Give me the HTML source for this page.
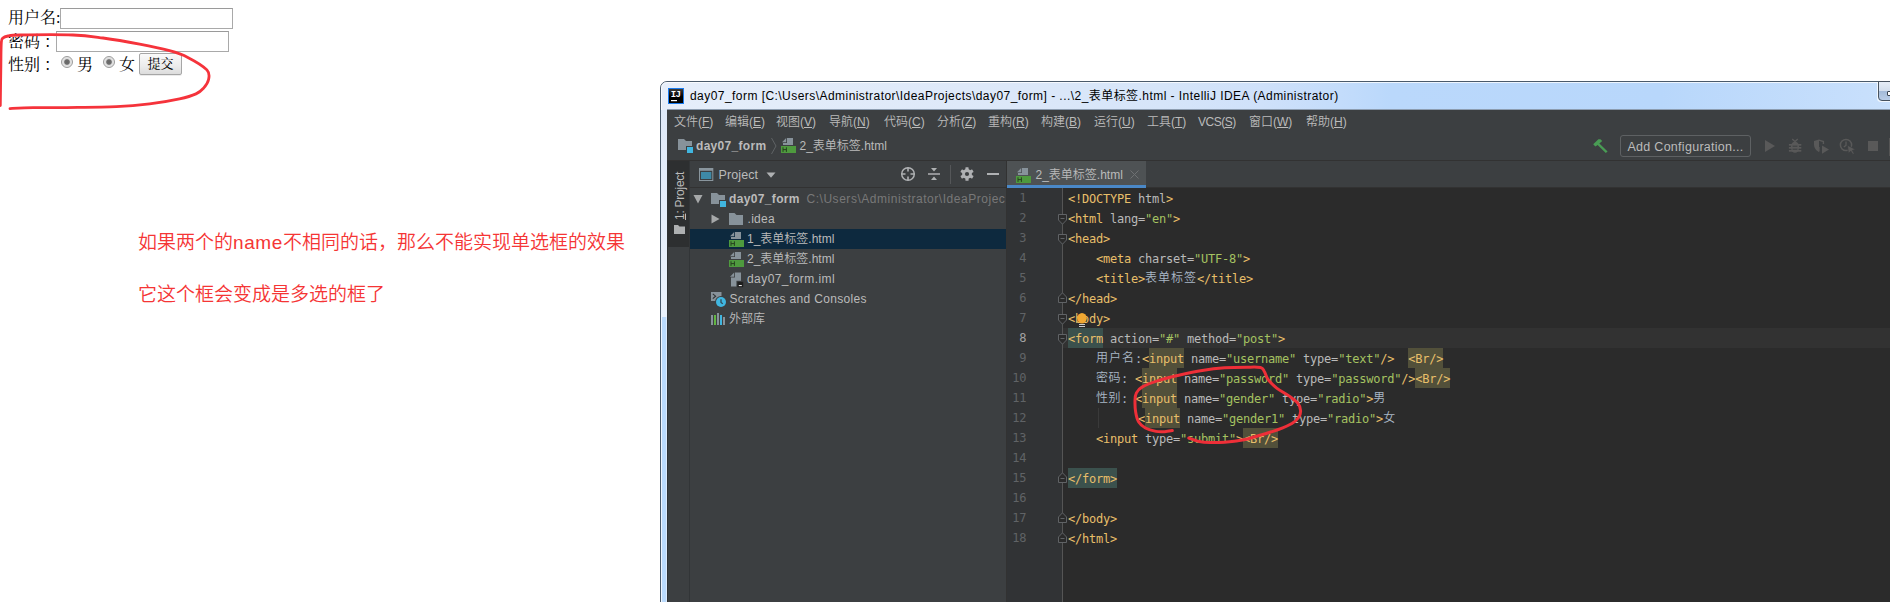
<!DOCTYPE html>
<html lang="zh">
<head>
<meta charset="UTF-8">
<title>表单标签</title>
<style>
html,body{margin:0;padding:0;}
body{width:1890px;height:602px;position:relative;overflow:hidden;background:#fff;
  font-family:"Liberation Sans","Noto Sans CJK SC",sans-serif;}
.abs{position:absolute;}
/* ---------- top-left browser form ---------- */
.frm{position:absolute;left:0;top:0;font-family:"Liberation Serif","Noto Serif CJK SC",serif;font-size:16px;color:#000;}
.frm .t{position:absolute;white-space:nowrap;line-height:18px;height:18px;}
.frm .inp{position:absolute;box-sizing:border-box;width:173px;height:21px;border:1px solid #a9a9a9;border-top-color:#9a9a9a;background:#fff;}
.frm .rad{position:absolute;box-sizing:border-box;width:12px;height:12px;border-radius:50%;border:1px solid #9b9b9b;
  background:radial-gradient(circle at 50% 50%,#666 0,#6e6e6e 2.3px,#dcdcdc 3.3px,#f2f2f2 100%);}
.frm .btn{position:absolute;box-sizing:border-box;left:139px;top:53px;width:43px;height:22px;border:1px solid #a6a6a6;border-radius:2px;
  background:linear-gradient(#fafafa,#ececec 60%,#dcdcdc);font-family:"Liberation Serif","Noto Serif CJK SC",serif;font-size:13px;line-height:20px;text-align:center;color:#000;box-shadow:0 1px 0 rgba(0,0,0,.08);}
/* ---------- red notes ---------- */
.note{position:absolute;left:138px;white-space:nowrap;color:#f53535;font-weight:350;font-family:"Liberation Sans","Noto Sans CJK SC",sans-serif;font-size:19px;line-height:26px;height:26px;}
/* ---------- IDE window ---------- */
.win{position:absolute;left:660px;top:81px;width:1300px;height:600px;box-sizing:border-box;border:1px solid #4a5a6b;border-radius:7px 0 0 0;
  background:linear-gradient(90deg,#e6eefa 0,#dee9f9 300px,#d6e5f9 500px,#cfe1fa 600px,#c3dcfb 680px,#bad8fb 730px,#b8d7fb 1000px,#c9e0fc 1230px);}
.win .hl{position:absolute;left:0;top:0;right:0;bottom:0;border:1px solid rgba(255,255,255,.75);border-radius:6px 0 0 0;}
.ide{position:absolute;left:667px;top:110px;width:1300px;height:600px;background:#3c3f41;color:#bbb;font-size:12px;font-weight:350;}
.ide .t{position:absolute;white-space:nowrap;line-height:16px;height:16px;}
.mono{font-family:"DejaVu Sans Mono","Liberation Mono","Noto Sans CJK SC",monospace;}

.ide u{text-decoration:underline;text-underline-offset:1px;}
.menu{position:absolute;left:0;top:0;width:100%;height:23px;}
.menu .t{top:4px;}
.nav{position:absolute;left:0;top:23px;width:100%;height:27px;border-bottom:1px solid #323232;}
.b{font-weight:bold;}

.ttl{left:690px;top:87px;letter-spacing:.45px;font-size:12px;line-height:18px;color:#000;white-space:nowrap;}
.wbtn{left:1878px;top:81px;width:30px;height:20px;box-sizing:border-box;border:1px solid #47525f;border-radius:0 0 0 4px;
  background:linear-gradient(#e6edf7 0,#d3deed 48%,#a3bad8 50%,#b9cde7 100%);box-shadow:-1px 1px 0 rgba(255,255,255,.75);}
.cfg{left:953px;top:25px;width:131px;height:22px;box-sizing:border-box;border:1px solid #5e6163;border-radius:3px;}
.vt{transform:rotate(-90deg);transform-origin:0 0;font-size:12px;}
.proj{position:absolute;left:23px;top:51px;width:316px;height:560px;background:#3c3f41;overflow:hidden;}
.phead{position:absolute;left:0;top:0;width:316px;height:26px;border-bottom:1px solid #323232;}
.sel{background:#0d293e;}
.dim{color:#787878;}
.ed{position:absolute;left:339px;top:51px;width:900px;height:560px;background:#2b2b2b;border-left:1px solid #323232;}
.tabs{position:absolute;left:0;top:0;width:900px;height:27px;background:#3c3f41;box-sizing:border-box;border-bottom:1px solid #323232;}
.tab{position:absolute;left:0;top:0;width:139px;height:27px;background:#4e5254;}
.gut{position:absolute;left:0;top:27px;width:55px;height:540px;background:#313335;border-right:1px solid #555;}
.cur{position:absolute;left:56px;top:167px;width:850px;height:20px;background:#323232;}

.row{position:absolute;left:0;width:900px;height:20px;line-height:20px;font-family:"DejaVu Sans Mono","Liberation Mono","Noto Sans CJK SC",monospace;font-size:12px;white-space:pre;letter-spacing:-0.224px;}
.ln{position:absolute;left:0;width:19.200px;text-align:right;color:#606366;}
.cur-n{color:#a4a3a3;}
.cd{position:absolute;left:61px;top:1px;height:20px;color:#a9b7c6;}
.tg{color:#e8bf6a;}.an{color:#bababa;}.av{color:#a5c261;}
.cj{font-family:"Noto Sans CJK SC",sans-serif;letter-spacing:1px;line-height:10px;position:relative;top:-1px;}
.hi{background:#52503a;display:inline-block;height:20px;vertical-align:top;margin-top:-1px;padding-top:1px;box-sizing:border-box;}
.hm{background:#3b514d;display:inline-block;height:20px;vertical-align:top;margin-top:-1px;padding-top:1px;box-sizing:border-box;}
.fm{left:51px;}
.fc{position:relative;left:4px;}
</style>
</head>
<body>



<!-- ================= browser form (top-left) ================= -->
<div class="frm">
  <span class="t" style="left:8px;top:9px;">用户名:</span>
  <div class="inp" style="left:60px;top:8px;"></div>
  <span class="t" style="left:8px;top:33px;">密码<span class="fc">：</span></span>
  <div class="inp" style="left:56px;top:31px;"></div>
  <span class="t" style="left:8px;top:56px;">性别<span class="fc">：</span></span>
  <div class="rad" style="left:61px;top:56px;"></div>
  <span class="t" style="left:77px;top:56px;">男</span>
  <div class="rad" style="left:103px;top:56px;"></div>
  <span class="t" style="left:119px;top:56px;">女</span>
  <div class="btn">提交</div>
</div>

<!-- ================= red notes ================= -->
<div class="note" style="top:230px;">如果两个的<span style="letter-spacing:.6px;font-weight:400;">name</span>不相同的话，那么不能实现单选框的效果</div>
<div class="note" style="top:282px;">它这个框会变成是多选的框了</div>

<!-- ================= IDE window ================= -->
<div class="win"><div class="hl"></div></div>
<div class="abs" style="left:661px;top:110px;width:6px;height:207px;background:linear-gradient(#dfe9f8,#eaf2fc);"></div>
<div class="abs" style="left:661px;top:317px;width:6px;height:300px;background:#badafc;box-shadow:inset 1px 0 0 #eef5fe,inset -1px 0 0 #dcebfd;"></div>
<div class="abs" style="left:667px;top:109px;width:1300px;height:1px;background:#8d9db0;"></div>

<!-- title bar content -->
<svg class="abs" style="left:668px;top:88px;" width="16" height="16" viewBox="0 0 16 16">
  <defs><linearGradient id="ijg" x1="0" y1="0" x2="0" y2="1"><stop offset="0" stop-color="#3a3a3a"/><stop offset=".55" stop-color="#000"/></linearGradient></defs>
  <rect x="0" y="0" width="16" height="16" fill="#1a7cf0"/>
  <rect x="1" y="1" width="14" height="14" fill="url(#ijg)"/>
  <text x="2.800" y="9.400" font-family="Liberation Mono,monospace" font-weight="bold" font-size="9" fill="#fff" letter-spacing="-.6">IJ</text>
  <rect x="3" y="12" width="6" height="1.2" fill="#fff"/>
</svg>
<span class="abs ttl">day07_form [C:\Users\Administrator\IdeaProjects\day07_form] - ...\2_表单标签.html - IntelliJ IDEA (Administrator)</span>
<div class="abs wbtn"><div class="abs" style="left:8px;top:9px;width:10px;height:5px;border:1px solid #3a4450;background:#fff;box-sizing:border-box;border-radius:1px;"></div></div>
<div class="ide" id="ide">

  <!-- menu bar -->
  <div class="menu">
    <span class="t" style="left:7px;">文件(<u>F</u>)</span>
    <span class="t" style="left:58px;">编辑(<u>E</u>)</span>
    <span class="t" style="left:109px;">视图(<u>V</u>)</span>
    <span class="t" style="left:162px;">导航(<u>N</u>)</span>
    <span class="t" style="left:217px;">代码(<u>C</u>)</span>
    <span class="t" style="left:270px;">分析(<u>Z</u>)</span>
    <span class="t" style="left:321px;">重构(<u>R</u>)</span>
    <span class="t" style="left:374px;">构建(<u>B</u>)</span>
    <span class="t" style="left:427px;">运行(<u>U</u>)</span>
    <span class="t" style="left:480px;">工具(<u>T</u>)</span>
    <span class="t" style="left:531px;letter-spacing:-.5px;">VCS(<u>S</u>)</span>
    <span class="t" style="left:582px;">窗口(<u>W</u>)</span>
    <span class="t" style="left:639px;">帮助(<u>H</u>)</span>
  </div>

  <!-- navigation bar -->
  <div class="nav">
    <svg class="abs" style="left:10px;top:5px;" width="17" height="16" viewBox="0 0 17 16"><path d="M1 1h6l2 2h6v5h-6v4H1z" fill="#87929a"/><rect x="10" y="9" width="6" height="6" fill="#40b6e0"/></svg>
    <span class="t b" style="left:29px;top:5px;letter-spacing:.3px;">day07_form</span>
    <svg class="abs" style="left:103px;top:3px;" width="8" height="20" viewBox="0 0 8 20"><path d="M1.5 2 L6 10 L1.5 18" fill="none" stroke="#5f6365" stroke-width="1"/></svg>
    <svg class="abs" style="left:114px;top:5px;" width="16" height="16" viewBox="0 0 16 16"><path d="M6 0h6v7H2V5h4z" fill="#87929a"/><path d="M5.200 0v4.200H1z" fill="#87929a"/><rect x="0" y="8" width="15" height="7" fill="#4e9a3e"/><path d="M2 9.3v4.6M5.4 9.3v4.6M2 11.6h3.4" stroke="#27401f" stroke-width="1" fill="none"/></svg>
    <span class="t" style="left:132.500px;top:5px;">2_表单标签.html</span>
  </div>

  <!-- right toolbar -->
  <svg class="abs" style="left:925px;top:28px;" width="17" height="16" viewBox="0 0 17 16"><path d="M1.2 6.2 L6.4 1.2 L8.4 1.2 L10.2 3 L7.4 5.4 L15.6 13.4 L13.8 15 L5.6 7 L3.4 8.6 z" fill="#499c54"/></svg>
  <div class="abs cfg"><span class="t" style="left:6.500px;top:3px;font-size:12.500px;letter-spacing:.28px;">Add Configuration...</span></div>
  <svg class="abs" style="left:1097px;top:29px;" width="12" height="14" viewBox="0 0 12 14"><path d="M1 1 L11 7 L1 13z" fill="#595959"/></svg>
  <svg class="abs" style="left:1121px;top:28px;" width="14" height="16" viewBox="0 0 14 16"><path d="M4.200 1L7 3.600L9.800 1" fill="none" stroke="#595959" stroke-width="1.300"/><ellipse cx="7" cy="9.100" rx="4.100" ry="5.700" fill="#595959"/><rect x=".9" y="6" width="12.400" height="1.700" fill="#595959"/><rect x=".9" y="9" width="12.400" height="1.700" fill="#595959"/><rect x=".9" y="12" width="12.400" height="1.700" fill="#595959"/><rect x="4.600" y="7.700" width="4.800" height="1" fill="#3c3f41"/><rect x="4.600" y="10.700" width="4.800" height="1" fill="#3c3f41"/></svg>
  <svg class="abs" style="left:1146px;top:28px;" width="17" height="16" viewBox="0 0 17 16"><path d="M6 1.600L1 3V6.500C1 10 3 12.600 6 14z" fill="#595959"/><path d="M6 2.200L10.400 3.500V6" fill="none" stroke="#595959" stroke-width="1.400"/><path d="M6 9V13.400" fill="none" stroke="#595959" stroke-width="1.200"/><path d="M9 7.400L16 11.500L9 15.700z" fill="#595959"/></svg>
  <svg class="abs" style="left:1172px;top:28px;" width="18" height="17" viewBox="0 0 18 17"><circle cx="7" cy="7" r="5.6" fill="none" stroke="#595959" stroke-width="1.5"/><path d="M7 3.6V7.4L4.8 9" fill="none" stroke="#595959" stroke-width="1.3"/><path d="M8.4 7.2 L16.6 11.4 L13.4 12.4 L15.4 15.6 L13.8 16.4 L11.8 13.2 L9.4 15.4z" fill="#595959" stroke="#3c3f41" stroke-width=".8"/></svg>
  <div class="abs" style="left:1201px;top:31px;width:10px;height:10px;background:#595959;"></div>
  <div class="abs" style="left:1222px;top:28px;width:1px;height:18px;background:#555;"></div>

  <!-- left tool-window stripe -->
  <div class="abs" style="left:0;top:51px;width:1px;height:560px;background:#2f3233;"></div>
  <div class="abs" style="left:1px;top:51px;width:21px;height:86px;background:#2d2f30;"></div>
  <div class="abs" style="left:22px;top:51px;width:1px;height:560px;background:#323537;"></div>
  <span class="t vt" style="left:5px;top:110px;letter-spacing:-.25px;"><u>1</u>: Project</span>
  
  <svg class="abs" style="left:7px;top:115px;" width="11" height="9" viewBox="0 0 11 9"><path d="M0 0h4l1.500 1.500H11V9H0z" fill="#aeb0b1"/></svg>

  <!-- project tool window -->
  <div class="proj">
    <div class="phead">
      <svg class="abs" style="left:9px;top:7px;" width="15" height="13" viewBox="0 0 15 13"><rect x="0" y="0" width="14.300" height="13" fill="#8a969e"/><rect x="1" y="2.800" width="12.300" height="9.200" fill="#3c3f41"/><rect x="2" y="4" width="10.300" height="7" fill="#3e89a6"/></svg>
      <span class="t" style="left:28.500px;top:6px;font-size:12.500px;letter-spacing:.1px;">Project</span>
      <svg class="abs" style="left:76px;top:11px;" width="10" height="6" viewBox="0 0 10 6"><path d="M0.5 0.5h9L5 5.8z" fill="#afb1b3"/></svg>
      <svg class="abs" style="left:210px;top:5px;" width="16" height="16" viewBox="0 0 16 16"><circle cx="8" cy="8" r="6.3" fill="none" stroke="#afb1b3" stroke-width="1.5"/><path d="M8 1.5v4M8 10.5v4M1.5 8h4M10.500 8h4" stroke="#afb1b3" stroke-width="1.6"/></svg>
      <svg class="abs" style="left:237px;top:6px;" width="14" height="14" viewBox="0 0 14 14"><path d="M1 7h12" stroke="#afb1b3" stroke-width="1.5"/><path d="M4 1h6L7 4.6zM4 13h6L7 9.400z" fill="#afb1b3"/></svg>
      <div class="abs" style="left:260px;top:4px;width:1px;height:19px;background:#555759;"></div>
      <svg class="abs" style="left:270px;top:6px;" width="14" height="14" viewBox="0 0 14 14"><g transform="translate(7 7)"><g fill="#afb1b3"><rect x="-1.6" y="-6.8" width="3.200" height="13.600" rx=".6"/><rect x="-1.6" y="-6.8" width="3.200" height="13.600" rx=".6" transform="rotate(60)"/><rect x="-1.6" y="-6.8" width="3.200" height="13.600" rx=".6" transform="rotate(120)"/><circle r="4.900"/></g><circle r="2.100" fill="#3c3f41"/></g></svg>
      <div class="abs" style="left:297px;top:12px;width:12px;height:2px;background:#afb1b3;"></div>
    </div>
    <div class="abs sel" style="left:0;top:68px;width:316px;height:20px;"></div>

    <svg class="abs" style="left:3px;top:33px;" width="10" height="10" viewBox="0 0 10 10"><path d="M0.500 1h9L5 9.500z" fill="#a6a8a9"/></svg>
    <svg class="abs" style="left:21px;top:31px;" width="17" height="16" viewBox="0 0 17 16"><path d="M0 1h6l2 2h6v5h-6v4H0z" fill="#87929a"/><rect x="9" y="9" width="6" height="6" fill="#40b6e0"/></svg>
    <span class="t b" style="left:39px;top:30px;letter-spacing:.35px;">day07_form</span>
    <span class="t dim" style="left:116.500px;top:30px;letter-spacing:.53px;">C:\Users\Administrator\IdeaProjec</span>

    <svg class="abs" style="left:21px;top:53px;" width="9" height="10" viewBox="0 0 9 10"><path d="M0.5 0.500v9L8.500 5z" fill="#a6a8a9"/></svg>
    <svg class="abs" style="left:39px;top:52px;" width="14" height="12" viewBox="0 0 14 12"><path d="M0 0h5.500l2 2H14v10H0z" fill="#87929a"/></svg>
    <span class="t" style="left:57.500px;top:50px;letter-spacing:.3px;">.idea</span>

    <svg class="abs" style="left:39px;top:71px;" width="16" height="16" viewBox="0 0 16 16"><path d="M6 0h6v7H2V5h4z" fill="#87929a"/><path d="M5.200 0v4.200H1z" fill="#87929a"/><rect x="0" y="8" width="15" height="7" fill="#4e9a3e"/><path d="M2 9.3v4.6M5.4 9.3v4.6M2 11.6h3.4" stroke="#27401f" stroke-width="1" fill="none"/></svg>
    <span class="t" style="left:57px;top:70px;">1_表单标签.html</span>

    <svg class="abs" style="left:39px;top:91px;" width="16" height="16" viewBox="0 0 16 16"><path d="M6 0h6v7H2V5h4z" fill="#87929a"/><path d="M5.200 0v4.200H1z" fill="#87929a"/><rect x="0" y="8" width="15" height="7" fill="#4e9a3e"/><path d="M2 9.3v4.6M5.4 9.3v4.6M2 11.6h3.4" stroke="#27401f" stroke-width="1" fill="none"/></svg>
    <span class="t" style="left:57px;top:90px;">2_表单标签.html</span>

    <svg class="abs" style="left:39px;top:111px;" width="16" height="18" viewBox="0 0 16 18"><path d="M6 .5h6v14H2V5.500h4z" fill="#87929a"/><path d="M5.200 .5V4.700H1z" fill="#87929a"/><rect x="7.400" y="8.800" width="7.600" height="7.200" fill="#3c3f41"/><rect x="8.400" y="9.800" width="5.800" height="5.400" fill="#1e1e1e"/><rect x="9.800" y="13" width="3" height="1.100" fill="#e8e8e8"/></svg>
    <span class="t" style="left:57px;top:110px;letter-spacing:.43px;">day07_form.iml</span>

    <svg class="abs" style="left:21px;top:131px;" width="17" height="17" viewBox="0 0 17 17"><rect x="0" y="0" width="10.500" height="9" fill="#87929a"/><path d="M1.800 1.800L4.600 4.200L1.800 6.600" fill="none" stroke="#2e3133" stroke-width="1.100"/><circle cx="10" cy="10" r="6" fill="#3c3f41"/><circle cx="10" cy="10" r="5" fill="#40b6e0"/><path d="M10 7.200V10.400L11.800 11.800" fill="none" stroke="#2e4a57" stroke-width="1.300"/></svg>
    <span class="t" style="left:39.500px;top:130px;letter-spacing:.33px;">Scratches and Consoles</span>

    <svg class="abs" style="left:21px;top:151px;" width="15" height="13" viewBox="0 0 15 13"><rect x="0" y="3" width="2" height="10" fill="#87929a"/><rect x="3" y="3" width="2" height="10" fill="#62b543"/><rect x="6" y="1" width="2" height="12" fill="#87929a"/><rect x="9" y="3" width="2" height="10" fill="#40b6e0"/><rect x="12" y="5" width="2" height="8" fill="#87929a"/></svg>
    <span class="t" style="left:39px;top:150px;">外部库</span>
  </div>

  <!-- editor -->
  <div class="ed">
    <div class="tabs">
      <div class="tab">
        <svg class="abs" style="left:9px;top:7px;" width="16" height="16" viewBox="0 0 16 16"><path d="M6 0h6v7H2V5h4z" fill="#87929a"/><path d="M5.200 0v4.200H1z" fill="#87929a"/><rect x="0" y="8" width="15" height="7" fill="#4e9a3e"/><path d="M2 9.3v4.6M5.4 9.3v4.6M2 11.6h3.4" stroke="#27401f" stroke-width="1" fill="none"/></svg>
        <span class="t" style="left:28.500px;top:6px;">2_表单标签.html</span>
        <svg class="abs" style="left:123px;top:9px;" width="9" height="9" viewBox="0 0 9 9"><path d="M0.500 0.500l8 8M8.500 0.500l-8 8" stroke="#6e7173" stroke-width="1"/></svg>
        <div class="abs" style="left:0;top:24px;width:139px;height:3px;background:#4a88c7;"></div>
      </div>
    </div>
    <div class="gut"></div>
    <div class="cur"></div>
    <div id="lines">
      <div class="row" style="top:27px;"><span class="ln">1</span><span class="cd"><span class="tg">&lt;!DOCTYPE </span><span class="an">html</span><span class="tg">&gt;</span></span></div>
      <div class="row" style="top:47px;"><span class="ln">2</span><span class="cd"><span class="tg">&lt;html</span><span class="an"> lang=</span><span class="av">"en"</span><span class="tg">&gt;</span></span></div>
      <div class="row" style="top:67px;"><span class="ln">3</span><span class="cd"><span class="tg">&lt;head&gt;</span></span></div>
      <div class="row" style="top:87px;"><span class="ln">4</span><span class="cd">    <span class="tg">&lt;meta</span><span class="an"> charset=</span><span class="av">"UTF-8"</span><span class="tg">&gt;</span></span></div>
      <div class="row" style="top:107px;"><span class="ln">5</span><span class="cd">    <span class="tg">&lt;title&gt;</span><span class="cj">表单标签</span><span class="tg">&lt;/title&gt;</span></span></div>
      <div class="row" style="top:127px;"><span class="ln">6</span><span class="cd"><span class="tg">&lt;/head&gt;</span></span></div>
      <div class="row" style="top:147px;"><span class="ln">7</span><span class="cd"><span class="tg">&lt;body&gt;</span></span></div>
      <div class="row" style="top:167px;"><span class="ln cur-n">8</span><span class="cd"><span class="hm"><span class="tg">&lt;form</span></span><span class="an"> action=</span><span class="av">"#"</span><span class="an"> method=</span><span class="av">"post"</span><span class="tg">&gt;</span></span></div>
      <div class="row" style="top:187px;"><span class="ln">9</span><span class="cd">    <span class="cj">用户名</span>:<span class="tg">&lt;</span><span class="hi"><span class="tg">input</span></span><span class="an"> name=</span><span class="av">"username"</span><span class="an"> type=</span><span class="av">"text"</span><span class="tg">/&gt;</span>  <span class="hi"><span class="tg">&lt;Br/&gt;</span></span></span></div>
      <div class="row" style="top:207px;"><span class="ln">10</span><span class="cd">    <span class="cj" style="letter-spacing:.5px;">密码</span>: <span class="tg">&lt;</span><span class="hi"><span class="tg">input</span></span><span class="an"> name=</span><span class="av">"password"</span><span class="an"> type=</span><span class="av">"password"</span><span class="tg">/&gt;</span><span class="hi"><span class="tg">&lt;Br/&gt;</span></span></span></div>
      <div class="row" style="top:227px;"><span class="ln">11</span><span class="cd">    <span class="cj" style="letter-spacing:.5px;">性别</span>: <span class="tg">&lt;</span><span class="hi"><span class="tg">input</span></span><span class="an"> name=</span><span class="av">"gender"</span><span class="an"> type=</span><span class="av">"radio"</span><span class="tg">&gt;</span><span class="cj">男</span></span></div>
      <div class="row" style="top:247px;"><span class="ln">12</span><span class="cd">          <span class="tg">&lt;</span><span class="hi"><span class="tg">input</span></span><span class="an"> name=</span><span class="av">"gender1"</span><span class="an"> type=</span><span class="av">"radio"</span><span class="tg">&gt;</span><span class="cj">女</span></span></div>
      <div class="row" style="top:267px;"><span class="ln">13</span><span class="cd">    <span class="tg">&lt;input</span><span class="an"> type=</span><span class="av">"submit"</span><span class="tg">&gt;</span><span class="hi"><span class="tg">&lt;Br/&gt;</span></span></span></div>
      <div class="row" style="top:287px;"><span class="ln">14</span><span class="cd"></span></div>
      <div class="row" style="top:307px;"><span class="ln">15</span><span class="cd"><span class="hm"><span class="tg">&lt;/form&gt;</span></span></span></div>
      <div class="row" style="top:327px;"><span class="ln">16</span><span class="cd"></span></div>
      <div class="row" style="top:347px;"><span class="ln">17</span><span class="cd"><span class="tg">&lt;/body&gt;</span></span></div>
      <div class="row" style="top:367px;"><span class="ln">18</span><span class="cd"><span class="tg">&lt;/html&gt;</span></span></div>
      <svg class="abs fm" style="top:53px;" width="9" height="11" viewBox="0 0 9 11"><path d="M0.5 0.5h8v5.500L4.500 10.200L0.500 6z" fill="#2b2b2b" stroke="#606366"/><path d="M2.500 4.500h4" stroke="#606366"/></svg>
      <svg class="abs fm" style="top:73px;" width="9" height="11" viewBox="0 0 9 11"><path d="M0.5 0.5h8v5.500L4.500 10.200L0.500 6z" fill="#2b2b2b" stroke="#606366"/><path d="M2.500 4.500h4" stroke="#606366"/></svg>
      <svg class="abs fm" style="top:153px;" width="9" height="11" viewBox="0 0 9 11"><path d="M0.5 0.5h8v5.500L4.500 10.200L0.500 6z" fill="#2b2b2b" stroke="#606366"/><path d="M2.500 4.500h4" stroke="#606366"/></svg>
      <svg class="abs fm" style="top:173px;" width="9" height="11" viewBox="0 0 9 11"><path d="M0.5 0.5h8v5.500L4.500 10.200L0.500 6z" fill="#2b2b2b" stroke="#606366"/><path d="M2.500 4.500h4" stroke="#606366"/></svg>
      <svg class="abs fm" style="top:131px;" width="9" height="11" viewBox="0 0 9 11"><path d="M0.500 10.500h8V5L4.500 0.800L0.500 5z" fill="#2b2b2b" stroke="#606366"/><path d="M2.500 6.500h4" stroke="#606366"/></svg>
      <svg class="abs fm" style="top:311px;" width="9" height="11" viewBox="0 0 9 11"><path d="M0.500 10.500h8V5L4.500 0.800L0.500 5z" fill="#2b2b2b" stroke="#606366"/><path d="M2.500 6.500h4" stroke="#606366"/></svg>
      <svg class="abs fm" style="top:351px;" width="9" height="11" viewBox="0 0 9 11"><path d="M0.500 10.500h8V5L4.500 0.800L0.500 5z" fill="#2b2b2b" stroke="#606366"/><path d="M2.500 6.500h4" stroke="#606366"/></svg>
      <svg class="abs fm" style="top:371px;" width="9" height="11" viewBox="0 0 9 11"><path d="M0.500 10.500h8V5L4.500 0.800L0.500 5z" fill="#2b2b2b" stroke="#606366"/><path d="M2.500 6.500h4" stroke="#606366"/></svg>
      <svg class="abs" style="left:69px;top:151px;" width="12" height="16" viewBox="0 0 12 16"><ellipse cx="6" cy="6.200" rx="4.800" ry="5.200" fill="#f0a732"/><rect x="3" y="12" width="6" height="1" fill="#c9cbcd"/><rect x="3" y="14" width="6" height="1" fill="#c9cbcd"/></svg>
      <div class="abs" style="left:91px;top:247px;width:1px;height:20px;background:#3a3a3a;"></div>
    </div>
  </div>
</div>

<!-- ================= hand-drawn red marks ================= -->
<svg class="abs" style="left:0;top:0;pointer-events:none;" width="1890" height="602" viewBox="0 0 1890 602" id="marks">
  <path d="M0.3 105.6 C0.4 99.7 0.6 80.4 0.8 70.0 C1.0 59.6 0.9 48.3 1.3 43.0 C1.7 37.7 1.9 39.2 3.0 38.0 C4.1 36.8 5.2 36.5 8.0 36.0 C10.8 35.5 9.2 35.2 20.0 35.0 C30.8 34.8 59.2 34.5 73.0 35.0 C86.8 35.5 91.9 36.5 103.0 38.0 C114.1 39.5 128.5 42.0 139.6 44.1 C150.7 46.2 161.5 48.5 169.5 50.7 C177.5 52.9 181.6 54.2 187.8 57.4 C194.0 60.6 203.5 66.2 206.9 69.9 C210.3 73.6 209.1 76.8 208.5 79.8 C207.9 82.8 205.7 85.8 203.6 88.1 C201.5 90.4 200.0 92.1 196.0 93.9 C192.0 95.7 187.2 97.2 179.5 98.9 C171.8 100.6 160.1 102.6 149.6 103.9 C139.1 105.2 130.2 106.1 116.3 106.7 C102.5 107.3 80.3 107.4 66.5 107.6 C52.6 107.8 42.6 107.4 33.2 107.6 C23.8 107.8 13.9 108.4 10.0 108.6" fill="none" stroke="#f5333b" stroke-width="2.8" stroke-linecap="round" stroke-linejoin="round"/>
  <path d="M1172.3 430.6 C1171.0 430.8 1167.5 431.6 1164.8 431.7 C1162.1 431.8 1159.1 432.0 1155.9 431.4 C1152.7 430.8 1148.3 429.6 1145.4 428.0 C1142.5 426.4 1140.3 424.6 1138.7 422.0 C1137.1 419.4 1136.3 415.9 1135.7 412.3 C1135.1 408.7 1134.9 403.6 1135.0 400.4 C1135.1 397.2 1135.2 395.1 1136.4 392.9 C1137.6 390.6 1138.9 388.9 1142.4 386.9 C1145.9 384.9 1151.2 382.9 1157.4 380.9 C1163.6 378.9 1172.3 376.7 1179.8 375.0 C1187.3 373.3 1194.7 371.7 1202.2 370.5 C1209.7 369.3 1217.1 368.4 1224.6 367.8 C1232.1 367.2 1241.1 367.2 1247.1 367.2 C1253.1 367.1 1257.7 366.8 1260.5 367.5 C1263.3 368.2 1263.0 369.2 1264.2 371.2 C1265.5 373.2 1265.9 376.5 1268.0 379.4 C1270.1 382.3 1273.5 385.6 1277.0 388.4 C1280.5 391.1 1285.4 393.4 1288.9 395.9 C1292.4 398.4 1296.0 400.8 1297.9 403.3 C1299.9 405.8 1300.5 408.4 1300.6 410.8 C1300.7 413.2 1300.0 415.4 1298.6 417.5 C1297.1 419.6 1295.3 421.5 1291.9 423.5 C1288.5 425.5 1283.4 427.6 1278.4 429.5 C1273.4 431.4 1268.0 432.9 1262.0 434.7 C1256.0 436.4 1248.8 438.8 1242.6 440.0 C1236.4 441.2 1230.1 441.8 1224.6 442.2 C1219.1 442.6 1213.9 442.6 1209.7 442.5 C1205.5 442.4 1202.7 442.2 1199.2 441.5 C1195.7 440.8 1190.5 438.6 1188.8 438.0" fill="none" stroke="#ee2f38" stroke-width="3" stroke-linecap="round" stroke-linejoin="round"/>
</svg>

</body>
</html>
